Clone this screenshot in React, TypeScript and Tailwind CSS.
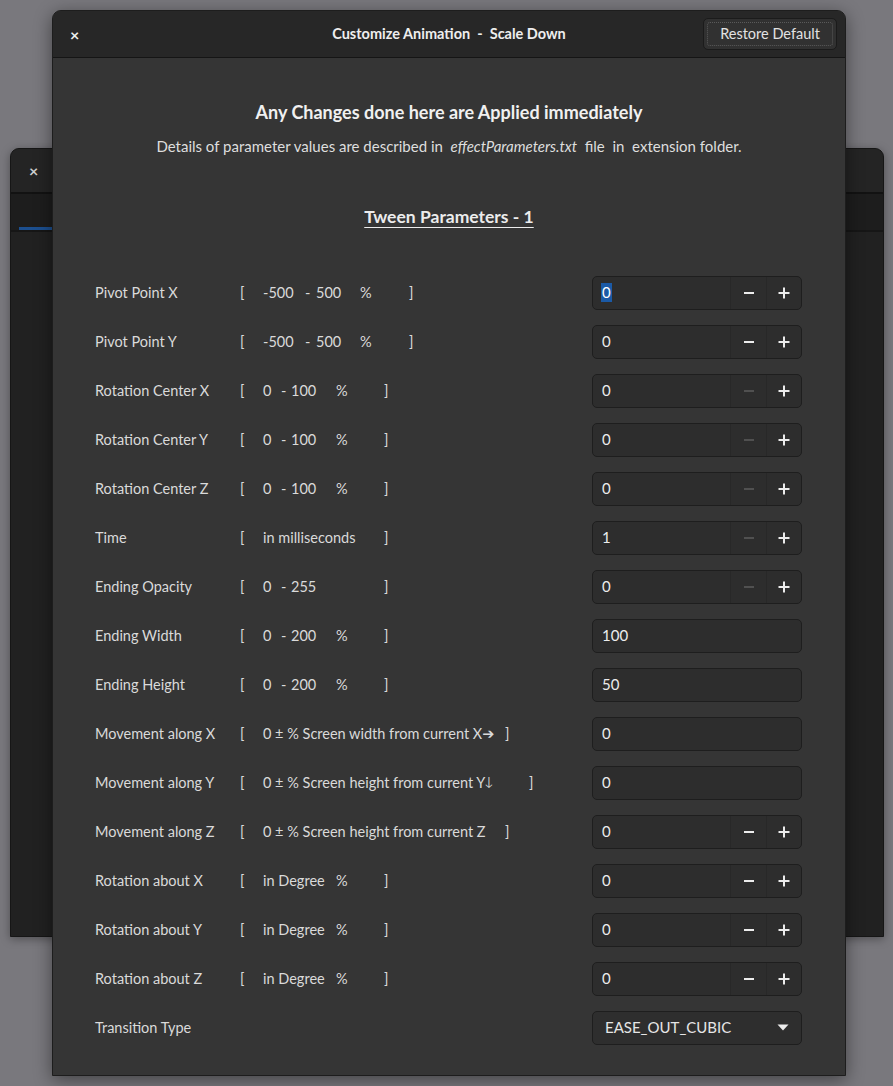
import React from 'react';

type Token = { t: string; w?: string };
type Row = {
  label: string;
  tokens: Token[];
  value: string;
  kind: 'spin' | 'spinMinOff' | 'plain' | 'select';
  selected?: boolean;
};

const pivot: Token[] = [
  { t: '[', w: 'w-[23px]' },
  { t: '-500', w: 'w-[42px]' },
  { t: '-', w: 'w-[11px]' },
  { t: '500', w: 'w-[44px]' },
  { t: '%', w: 'w-[49px]' },
  { t: ']' },
];

const centre: Token[] = [
  { t: '[', w: 'w-[23px]' },
  { t: '0', w: 'w-[18px]' },
  { t: '-', w: 'w-[10px]' },
  { t: '100', w: 'w-[45px]' },
  { t: '%', w: 'w-[48px]' },
  { t: ']' },
];

const size: Token[] = [
  { t: '[', w: 'w-[23px]' },
  { t: '0', w: 'w-[18px]' },
  { t: '-', w: 'w-[10px]' },
  { t: '200', w: 'w-[45px]' },
  { t: '%', w: 'w-[48px]' },
  { t: ']' },
];

const degree: Token[] = [
  { t: '[', w: 'w-[23px]' },
  { t: 'in Degree', w: 'w-[73px]' },
  { t: '%', w: 'w-[48px]' },
  { t: ']' },
];

const rows: Row[] = [
  { label: 'Pivot Point X', tokens: pivot, value: '0', kind: 'spin', selected: true },
  { label: 'Pivot Point Y', tokens: pivot, value: '0', kind: 'spin' },
  { label: 'Rotation Center X', tokens: centre, value: '0', kind: 'spinMinOff' },
  { label: 'Rotation Center Y', tokens: centre, value: '0', kind: 'spinMinOff' },
  { label: 'Rotation Center Z', tokens: centre, value: '0', kind: 'spinMinOff' },
  {
    label: 'Time',
    tokens: [{ t: '[', w: 'w-[23px]' }, { t: 'in milliseconds', w: 'w-[121px]' }, { t: ']' }],
    value: '1',
    kind: 'spinMinOff',
  },
  {
    label: 'Ending Opacity',
    tokens: [
      { t: '[', w: 'w-[23px]' },
      { t: '0', w: 'w-[18px]' },
      { t: '-', w: 'w-[10px]' },
      { t: '255', w: 'w-[93px]' },
      { t: ']' },
    ],
    value: '0',
    kind: 'spinMinOff',
  },
  { label: 'Ending Width', tokens: size, value: '100', kind: 'plain' },
  { label: 'Ending Height', tokens: size, value: '50', kind: 'plain' },
  {
    label: 'Movement along X',
    tokens: [{ t: '[', w: 'w-[23px]' }, { t: '0 ± % Screen width from current X➔', w: 'w-[242px]' }, { t: ']' }],
    value: '0',
    kind: 'plain',
  },
  {
    label: 'Movement along Y',
    tokens: [{ t: '[', w: 'w-[23px]' }, { t: '0 ± % Screen height from current Y🡓', w: 'w-[266px]' }, { t: ']' }],
    value: '0',
    kind: 'plain',
  },
  {
    label: 'Movement along Z',
    tokens: [{ t: '[', w: 'w-[23px]' }, { t: '0 ± % Screen height from current Z', w: 'w-[242px]' }, { t: ']' }],
    value: '0',
    kind: 'spin',
  },
  { label: 'Rotation about X', tokens: degree, value: '0', kind: 'spin' },
  { label: 'Rotation about Y', tokens: degree, value: '0', kind: 'spin' },
  { label: 'Rotation about Z', tokens: degree, value: '0', kind: 'spin' },
  { label: 'Transition Type', tokens: [], value: 'EASE_OUT_CUBIC', kind: 'select' },
];

function Minus({ off }: { off?: boolean }) {
  return (
    <svg width="12" height="12" viewBox="0 0 12 12">
      <rect x="1" y="5" width="10" height="2" fill={off ? '#505050' : '#ececec'} />
    </svg>
  );
}

function Plus() {
  return (
    <svg width="12" height="12" viewBox="0 0 12 12">
      <rect x="0.5" y="5" width="11" height="2" fill="#ececec" />
      <rect x="5" y="0.5" width="2" height="11" fill="#ececec" />
    </svg>
  );
}

function Field({ row }: { row: Row }) {
  if (row.kind === 'select') {
    return (
      <div className="flex h-[34px] w-[210px] items-center justify-between rounded-[5px] border border-[#1e1e1e] bg-[#2e2e2e] pl-[12px] pr-[12px] text-[15px] text-[#e6e6e6]">
        <span>{row.value}</span>
        <svg width="12" height="7" viewBox="0 0 12 7">
          <path d="M0.5 0.5 L11.5 0.5 L6 6.5 Z" fill="#ececec" />
        </svg>
      </div>
    );
  }
  const spin = row.kind !== 'plain';
  return (
    <div className="flex h-[34px] w-[210px] items-stretch overflow-hidden rounded-[5px] border border-[#1e1e1e] bg-[#2d2d2d] text-[15px] text-[#ececec]">
      <div className="flex flex-1 items-center pl-[8px]">
        {row.selected ? (
          <span className="bg-[#1b5aa6] px-[1px] leading-[19px] text-white">{row.value}</span>
        ) : (
          <span className="px-[1px]">{row.value}</span>
        )}
      </div>
      {spin && (
        <>
          <div className="flex w-[36px] items-center justify-center border-l border-[#282828]">
            <Minus off={row.kind === 'spinMinOff'} />
          </div>
          <div className="flex w-[35px] items-center justify-center border-l border-[#282828]">
            <Plus />
          </div>
        </>
      )}
    </div>
  );
}

function ParamRow({ row }: { row: Row }) {
  return (
    <div className="flex h-[49px] items-center text-[14.5px] text-[#dadada]">
      <div className="w-[145px] shrink-0">{row.label}</div>
      <div className="flex flex-1 items-center whitespace-pre">
        {row.tokens.map((tk, i) => (
          <span key={i} className={`inline-block ${tk.w ?? ''}`}>
            {tk.t}
          </span>
        ))}
      </div>
      <Field row={row} />
    </div>
  );
}

export default function App() {
  return (
    <div
      className="relative h-[1086px] w-[893px] overflow-hidden bg-[#79787d]"
      style={{ fontFamily: 'Lato, "Noto Sans", "DejaVu Sans", sans-serif' }}
    >
      {/* window behind the dialog */}
      <div className="absolute left-[10px] top-[148px] flex h-[789px] w-[874px] flex-col overflow-hidden rounded-t-[9px] border border-[#161616] bg-[#1f1f1f] shadow-[0_2px_10px_rgba(0,0,0,0.35)]">
        <div className="flex h-[45px] items-center border-b-2 border-[#121212] bg-[#242424] pl-[18px] text-[16px] font-bold text-[#cfcfcf]">
          ×
        </div>
        <div className="flex h-[38px] items-end border-b-2 border-[#161616] bg-[#1d1d1d] pl-[8px]">
          <div className="h-[3px] w-[120px] bg-[#1c4f8f]" />
        </div>
        <div className="flex-1 bg-[#212121]" />
      </div>

      {/* dialog */}
      <div className="absolute left-[52px] top-[10px] flex h-[1066px] w-[794px] flex-col overflow-hidden rounded-t-[9px] border border-[#1d1d1d] bg-[#353535] shadow-[0_4px_18px_rgba(0,0,0,0.45)]">
        <div className="relative flex h-[47px] shrink-0 items-center justify-center border-b border-[#151515] bg-[#272727]">
          <span className="absolute left-[17px] top-[12px] text-[16px] font-bold text-[#efefef]">×</span>
          <span className="whitespace-pre text-[14.5px] font-bold text-[#eeeeee]">Customize Animation  -  Scale Down</span>
          <div className="absolute right-[8px] top-[7px] flex h-[32px] w-[134px] items-center justify-center rounded-[5px] border border-[#1b1b1b] bg-[#313131] p-[3px]">
            <div className="flex h-full w-full items-center justify-center rounded-[3px] border border-dotted border-[#5a5a5a] text-[14.5px] text-[#e2e2e2]">
              Restore Default
            </div>
          </div>
        </div>

        <div className="flex flex-col">
          <div className="mt-[42px] text-center text-[18px] font-bold leading-6 text-[#f0f0f0]">
            Any Changes done here are Applied immediately
          </div>
          <div className="mt-[12px] whitespace-pre text-center text-[15px] leading-5 text-[#dedede]">
            {'Details of parameter values are described in  '}
            <i>effectParameters.txt</i>
            {'  file  in  extension folder.'}
          </div>
          <div className="mt-[49px] text-center text-[17.5px] font-bold leading-6 text-[#ececec]">
            <span className="underline decoration-1 underline-offset-[4px]">Tween Parameters - 1</span>
          </div>
          <div className="mt-[39px] flex flex-col pl-[42px] pr-[43px]">
            {rows.map((r) => (
              <ParamRow key={r.label} row={r} />
            ))}
          </div>
        </div>
      </div>
    </div>
  );
}
